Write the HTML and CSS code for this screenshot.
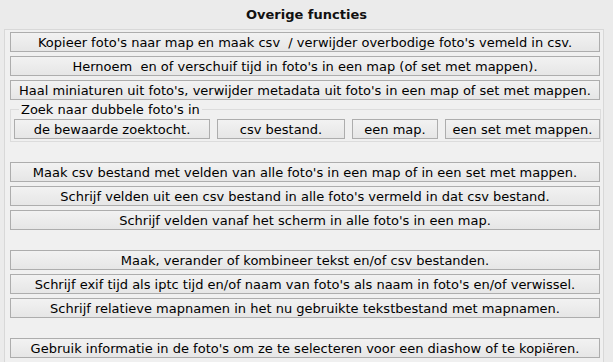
FILE: index.html
```html
<!DOCTYPE html>
<html lang="nl">
  <head>
    <meta charset="UTF-8" />
    <meta name="viewport" content="width=device-width, initial-scale=1.0" />
    <title>Overige functies</title>
    <link rel="stylesheet" href="styles.css">
  </head>
  <body>
    <h1 class="title">Overige functies</h1>
    <div class="panel">
      <div class="stack">
        <button class="btn">Kopieer foto's naar map en maak csv &nbsp;/ verwijder overbodige foto's vemeld in csv.</button>
        <button class="btn">Hernoem &nbsp;en of verschuif tijd in foto's in een map (of set met mappen).</button>
        <button class="btn">Haal miniaturen uit foto's, verwijder metadata uit foto's in een map of set met mappen.</button>
      </div>
      <fieldset class="group">
        <legend>Zoek naar dubbele foto's in</legend>
        <div class="group-row">
          <button class="btn">de bewaarde zoektocht.</button>
          <button class="btn">csv bestand.</button>
          <button class="btn">een map.</button>
          <button class="btn">een set met mappen.</button>
        </div>
      </fieldset>
      <div class="stack section">
        <button class="btn">Maak csv bestand met velden van alle foto's in een map of in een set met mappen.</button>
        <button class="btn">Schrijf velden uit een csv bestand in alle foto's vermeld in dat csv bestand.</button>
        <button class="btn">Schrijf velden vanaf het scherm in alle foto's in een map.</button>
      </div>
      <div class="stack section">
        <button class="btn">Maak, verander of kombineer tekst en/of csv bestanden.</button>
        <button class="btn">Schrijf exif tijd als iptc tijd en/of naam van foto's als naam in foto's en/of verwissel.</button>
        <button class="btn">Schrijf relatieve mapnamen in het nu gebruikte tekstbestand met mapnamen.</button>
      </div>
      <div class="stack section">
        <button class="btn">Gebruik informatie in de foto's om ze te selecteren voor een diashow of te kopiëren.</button>
      </div>
    </div>
  </body>
</html>
```

FILE: styles.css
```css
body {
  margin: 0;
  background: #ebebeb;
  font-family: "DejaVu Sans", Verdana, sans-serif;
  font-size: 13px;
  color: #000;
  height: 362px;
  overflow: hidden;
}
.title {
  margin: 0;
  height: 29px;
  line-height: 29px;
  text-align: center;
  font-size: 13px;
  font-weight: bold;
  color: #111;
}
.panel {
  margin-left: 4px;
  width: 600px;
  height: 340px;
  border: 1px solid #d8d8d8;
  border-bottom: none;
  background: #f0f0f0;
  padding: 2px 0 0 5px;
  box-sizing: border-box;
}
.stack {
  display: flex;
  flex-direction: column;
  gap: 4px;
}
.section {
  margin-top: 20px;
}
.btn {
  display: block;
  width: 590px;
  height: 20px;
  padding: 0 2px;
  margin: 0;
  border: 1px solid #adadad;
  background: linear-gradient(#f2f2f2, #e6e6e6);
  font-family: inherit;
  font-size: 13px;
  color: #000;
  text-align: center;
  white-space: nowrap;
  overflow: hidden;
}
.group {
  width: 591px;
  margin: 3px 0 0;
  padding: 3px 0 2px 3px;
  border: 1px solid #dcdcdc;
  box-sizing: border-box;
}
.group legend {
  padding: 0 2px;
  margin-left: 5px;
  font-size: 13px;
  line-height: 13px;
}
.group-row {
  display: grid;
  grid-template-columns: 196px 128px 86px 155px;
  gap: 7px;
}
.group-row .btn {
  width: auto;
}
```
